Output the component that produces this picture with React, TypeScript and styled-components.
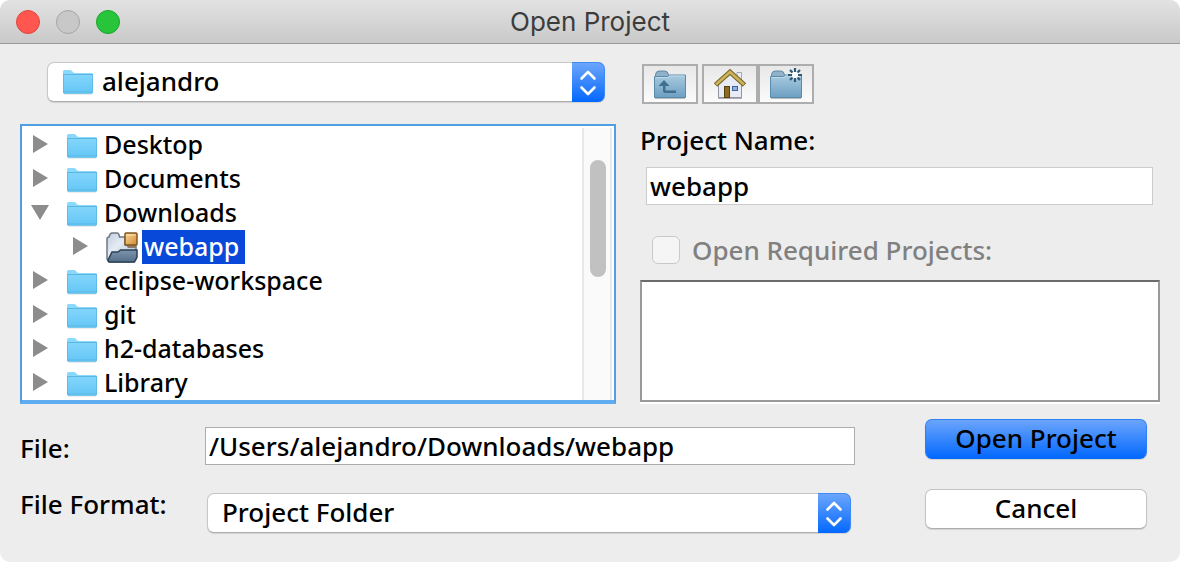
import React, { useState } from "react";
import styled, { createGlobalStyle } from "styled-components";

const GlobalStyle = createGlobalStyle`
  *, *::before, *::after { box-sizing: border-box; }
  body { margin: 0; background: #fff; }
  button, input, select { font: inherit; color: inherit; }
`;

const Window = styled.div`
  display: flex;
  flex-direction: column;
  min-height: 100vh;
  overflow: hidden;
  border-radius: 10px;
  background: #ededed;
  color: #000;
  font-family: "Noto Sans", "Open Sans", sans-serif;
  font-size: 26px;
  font-weight: 500;
  line-height: 34px;
`;

const TitleBar = styled.header`
  display: grid;
  grid-template-columns: 1fr auto 1fr;
  align-items: center;
  height: 44px;
  padding: 0 16px;
  border-bottom: 1px solid #9a9a9a;
  background: linear-gradient(#e2e2e2, #c9c9c9);
`;

const Lights = styled.div`
  display: flex;
  gap: 16px;
`;

const Light = styled.button<{ $fill: string; $edge: string }>`
  width: 24px;
  height: 24px;
  padding: 0;
  border: 1px solid ${(p) => p.$edge};
  border-radius: 50%;
  background: ${(p) => p.$fill};
`;

const Title = styled.h1`
  margin: 0;
  color: #3c3c3c;
  font-family: Inter, sans-serif;
  font-size: 26px;
  font-weight: 400;
`;

const Panels = styled.main`
  display: grid;
  grid-template-columns: minmax(0, 596fr) minmax(0, 520fr);
  gap: 24px;
  padding: 18px 20px 0;
`;

const Column = styled.section`
  display: flex;
  flex-direction: column;
`;

const LocationRow = styled.div`
  padding: 0 11px 22px 27px;
`;

const SelectShell = styled.div`
  position: relative;
`;

const SelectBox = styled.select<{ $icon?: boolean }>`
  display: block;
  appearance: none;
  width: 100%;
  height: 40px;
  padding: 0 40px 2px ${(p) => (p.$icon ? 54 : 14)}px;
  border: 1px solid #c6c6c6;
  border-bottom-color: #adadad;
  border-radius: 7px;
  background: #fff;
  box-shadow: 0 1px 1px rgba(0, 0, 0, 0.12);
`;

const SelectIcon = styled.span`
  position: absolute;
  top: 5px;
  left: 15px;
  display: flex;
  pointer-events: none;
`;

const Stepper = styled.span`
  position: absolute;
  top: 0;
  right: 0;
  display: flex;
  align-items: center;
  justify-content: center;
  width: 33px;
  height: 40px;
  border: 1px solid #3f8bf5;
  border-width: 1px 1px 0 0;
  border-radius: 0 7px 7px 0;
  background: linear-gradient(#6ba5fb, #0368fe);
  pointer-events: none;
`;

const TreeFrame = styled.div`
  display: flex;
  border: 2px solid #509fe2;
  border-bottom: 4px solid #5fadf0;
  background: #fff;
  padding-top: 2px;
`;

const Tree = styled.ul`
  flex: 1;
  margin: 0;
  padding: 0 0 0 4px;
  list-style: none;
  font-size: 25px;
`;

const TreeRow = styled.li<{ $level: number }>`
  display: flex;
  align-items: center;
  height: 34px;
  padding-left: ${(p) => p.$level * 40}px;
`;

const Disclosure = styled.button`
  display: flex;
  align-items: center;
  justify-content: center;
  width: 28px;
  height: 32px;
  margin-right: 12px;
  padding: 0 0 2px;
  border: 0;
  background: none;
`;

const ItemName = styled.span<{ $selected?: boolean }>`
  height: 34px;
  margin-left: 4px;
  padding: 0 6px 0 2px;
  background: ${(p) => (p.$selected ? "#0849d9" : "transparent")};
  color: ${(p) => (p.$selected ? "#fff" : "inherit")};
  line-height: 32px;
`;

const ScrollTrack = styled.div`
  width: 30px;
  margin-right: 2px;
  padding: 32px 4px 0 6px;
  border: solid #e8e8e8;
  border-width: 0 2px;
  background: #fafafa;
`;

const ScrollThumb = styled.div`
  width: 16px;
  height: 117px;
  border-radius: 8px;
  background: #c1c1c1;
`;

const Toolbar = styled.div`
  display: flex;
  padding: 2px 2px 19px;
`;

const ToolButton = styled.button<{ $apart?: boolean }>`
  display: flex;
  align-items: center;
  justify-content: center;
  width: 56px;
  height: 40px;
  margin-right: ${(p) => (p.$apart ? 4 : 0)}px;
  padding: 0;
  border: 2px solid #adadad;
  background: linear-gradient(#e8e8e8, #fbfbfb);
`;

const NameField = styled.div`
  display: flex;
  flex-direction: column;
  gap: 10px;
`;

const TextInput = styled.input<{ $soft?: boolean }>`
  width: 100%;
  height: 38px;
  padding: 0 3px;
  border: 1px solid ${(p) => (p.$soft ? "#cbcbcb" : "#adadad")};
  border-radius: 0;
  background: #fff;
  outline: 0;
`;

const Inset = styled.div`
  display: flex;
  padding: 0 7px 0 6px;
`;

const RequiredRow = styled.label`
  display: flex;
  align-items: center;
  gap: 12px;
  margin: 28px 0 13px;
  padding-left: 12px;
  color: #808080;
`;

const CheckBox = styled.input`
  appearance: none;
  width: 28px;
  height: 28px;
  margin: 0;
  border: 1px solid #c9c9c9;
  border-radius: 6px;
  background: #f5f5f5;
`;

const RequiredList = styled.div`
  flex: 1;
  margin-bottom: 2px;
  border: 2px solid #999;
  border-top-color: #6b6b6b;
  background: #fff;
  box-shadow: 0 2px 0 #fff;
`;

const Footer = styled.footer`
  display: flex;
  justify-content: space-between;
  gap: 70px;
  padding: 15px 33px 29px 20px;
`;

const Fields = styled.div`
  flex: 1;
  display: grid;
  grid-template-columns: 185px minmax(0, 1fr);
  align-items: start;
  row-gap: 22px;
  padding-top: 8px;
`;

const FieldLabel = styled.label<{ $low?: boolean }>`
  padding-top: ${(p) => (p.$low ? 4 : 0)}px;
`;

const FormatField = styled.div`
  padding: 6px 4px 0 2px;
`;

const Actions = styled.div`
  display: flex;
  flex-direction: column;
  gap: 30px;
  width: 222px;
`;

const ActionButton = styled.button<{ $primary?: boolean }>`
  height: 40px;
  padding: 0 0 2px;
  border: 1px solid ${(p) => (p.$primary ? "#2f7ff3" : "#c4c4c4")};
  border-bottom-color: ${(p) => (p.$primary ? "#0368fe" : "#adadad")};
  border-radius: 7px;
  background: ${(p) => (p.$primary ? "linear-gradient(#6ba5fb, #0368fe)" : "#fff")};
  box-shadow: 0 1px 1px rgba(0, 0, 0, 0.12);
`;

function Folder() {
  return (
    <svg width="32" height="28" viewBox="0 -2 32 28" aria-hidden="true">
      <defs>
        <linearGradient id="folderFront" x1="0" y1="0" x2="0" y2="1">
          <stop offset="0" stopColor="#82d5fb" />
          <stop offset="1" stopColor="#64c6f6" />
        </linearGradient>
      </defs>
      <path d="M2 25h28" stroke="#000" strokeOpacity=".15" />
      <path d="M1 23V2.500Q1 1 2.500 1H8q1.500 0 2.500 1.500T13 4h16.500Q31 4 31 5.500V23q0 1.500-1.500 1.500h-27Q1 24.500 1 23z" fill="#8ad8fb" />
      <path d="M1 6h30v17q0 1.500-1.500 1.500h-27Q1 24.500 1 23z" fill="url(#folderFront)" />
      <path d="M1 5.500h30" stroke="#5cb6e2" />
      <path d="M1.500 6v17q0 1 1 1h27q1 0 1-1V6" fill="none" stroke="#57b3df" strokeOpacity=".7" />
      <path d="M2 22.500h28" stroke="#55b4e2" strokeOpacity=".4" />
    </svg>
  );
}

function ProjectFolder() {
  return (
    <svg width="32" height="32" viewBox="0 0 32 32" aria-hidden="true">
      <defs>
        <linearGradient id="projBack" x1="0" y1="0" x2="1" y2="1">
          <stop offset="0" stopColor="#c3cedb" />
          <stop offset=".4" stopColor="#e4ebf4" />
          <stop offset="1" stopColor="#a9b9cb" />
        </linearGradient>
        <linearGradient id="projFront" x1="0" y1="0" x2="0" y2="1">
          <stop offset="0" stopColor="#7d95ae" />
          <stop offset="1" stopColor="#566f88" />
        </linearGradient>
        <linearGradient id="projBox" x1="0" y1="0" x2="1" y2="1">
          <stop offset="0" stopColor="#ffd795" />
          <stop offset="1" stopColor="#cf8a35" />
        </linearGradient>
      </defs>
      <path d="M1 28V8q0-2 2-2 1-4 3-4h5q2 0 2.500 4H19v8h11v14l-3 3H3z" fill="url(#projBack)" stroke="#6b7785" strokeWidth="1.500" />
      <path d="M2 29l4-8h6l2.500-2H31v7l-2.500 5H4q-2 0-2-2z" fill="url(#projFront)" stroke="#2d4155" strokeWidth="1.500" />
      <path d="M20 14h10v3H22z" fill="#8b7a66" />
      <rect x="19" y="2" width="12" height="12" rx="1" fill="url(#projBox)" stroke="#805722" strokeWidth="1.500" />
      <path d="M20.500 4h9" stroke="#ffe4ad" />
    </svg>
  );
}

function Chevrons() {
  return (
    <svg width="18" height="26" viewBox="0 0 18 26" aria-hidden="true">
      <path d="M2.500 8.500L9 2l6.500 6.500M2.500 17.500L9 24l6.500-6.500" fill="none" stroke="#fff" strokeWidth="2.600" strokeLinecap="round" strokeLinejoin="round" />
    </svg>
  );
}

function Triangle({ open }: { open: boolean }) {
  return (
    <svg width="18" height="18" viewBox="0 0 18 18" aria-hidden="true">
      <path d={open ? "M0 2h18L9 17z" : "M2 0l15 9-15 9z"} fill="#8c8c8c" />
    </svg>
  );
}

function SteelFolder({ children }: { children?: React.ReactNode }) {
  return (
    <svg width="34" height="32" viewBox="0 0 34 32" aria-hidden="true">
      <defs>
        <linearGradient id="steel" x1="0" y1="0" x2="0" y2="1">
          <stop offset="0" stopColor="#a9cbe0" />
          <stop offset="1" stopColor="#6d9fc2" />
        </linearGradient>
      </defs>
      <path d="M2 30.500h30" stroke="#000" strokeOpacity=".25" />
      <path d="M2.500 9V6.500Q3 3 6 3h6q3 0 3.500 4v2z" fill="#8fb2c9" stroke="#628aa6" />
      <path d="M1.500 8.500h13l2-1.500h16v22.500h-31z" fill="url(#steel)" stroke="#5a8aac" />
      <path d="M2.500 9.500H15l2-1.500h14.500" fill="none" stroke="#bddaea" />
      {children}
    </svg>
  );
}

function UpFolder() {
  return (
    <SteelFolder>
      <path d="M11 12l5.500 6H12.500v4.500H23v2.500H12q-2 0-2-2v-5H5.500z" fill="#41708f" />
    </SteelFolder>
  );
}

function NewFolder() {
  return (
    <SteelFolder>
      <circle cx="26" cy="7" r="4.500" fill="#fff" fillOpacity=".8" />
      <path
        d="M26 0v4M26 10v4M19 7h4M29 7h4M21 2l2.500 2.500M28.500 9.500L31 12M31 2l-2.500 2.500M23.500 9.500L21 12"
        stroke="#2f5873"
        strokeWidth="2.200"
      />
      <circle cx="26" cy="7" r="2.500" fill="#fff" />
    </SteelFolder>
  );
}

function Home() {
  return (
    <svg width="34" height="32" viewBox="0 0 34 32" aria-hidden="true">
      <path d="M5 30.500h24" stroke="#000" strokeOpacity=".3" />
      <path d="M24 4.500h4.500v10l-4.500-4z" fill="#e9edf5" stroke="#a3a9b8" />
      <path d="M5.500 15L17 5l11.500 10v14.500h-23z" fill="#e9ebf4" stroke="#9296a4" />
      <path d="M2.500 17L17 4l14.500 13" fill="none" stroke="#7a6726" strokeWidth="5" />
      <path d="M3 16.500L17 4l14 12.500" fill="none" stroke="#cdb45c" strokeWidth="2.600" />
      <rect x="11.500" y="18.500" width="5" height="11" fill="#8f6b22" stroke="#594012" />
      <rect x="19.500" y="18.500" width="5" height="4" fill="#8fb4e4" stroke="#3c639b" />
    </svg>
  );
}

type Item = { name: string; nested?: boolean };

const items: Item[] = [
  { name: "Desktop" },
  { name: "Documents" },
  { name: "Downloads" },
  { name: "webapp", nested: true },
  { name: "eclipse-workspace" },
  { name: "git" },
  { name: "h2-databases" },
  { name: "Library" },
];

export default function App() {
  const [open, setOpen] = useState(true);
  const [name, setName] = useState("webapp");
  const [file, setFile] = useState("/Users/alejandro/Downloads/webapp");
  const rows = items.filter((item) => open || !item.nested);

  return (
    <>
      <GlobalStyle />
      <Window>
        <TitleBar>
          <Lights>
            <Light $fill="#ff564f" $edge="#e2463f" aria-label="Close" />
            <Light $fill="#c8c8c8" $edge="#a5a5a5" aria-label="Minimize" />
            <Light $fill="#28c53b" $edge="#17a528" aria-label="Zoom" />
          </Lights>
          <Title>Open Project</Title>
        </TitleBar>

        <Panels>
          <Column>
            <LocationRow>
              <SelectShell>
                <SelectBox $icon aria-label="Location">
                  <option>alejandro</option>
                </SelectBox>
                <SelectIcon><Folder /></SelectIcon>
                <Stepper><Chevrons /></Stepper>
              </SelectShell>
            </LocationRow>
            <TreeFrame>
              <Tree role="tree" aria-label="Folders">
                {rows.map((item) => {
                  const expanded = item.name === "Downloads" && open;
                  return (
                    <TreeRow key={item.name} role="treeitem" aria-selected={!!item.nested} $level={item.nested ? 1 : 0}>
                      <Disclosure
                        aria-label={`Toggle ${item.name}`}
                        onClick={() => item.name === "Downloads" && setOpen(!open)}
                      >
                        <Triangle open={expanded} />
                      </Disclosure>
                      {item.nested ? <ProjectFolder /> : <Folder />}
                      <ItemName $selected={item.nested}>{item.name}</ItemName>
                    </TreeRow>
                  );
                })}
              </Tree>
              <ScrollTrack><ScrollThumb /></ScrollTrack>
            </TreeFrame>
          </Column>

          <Column>
            <Toolbar>
              <ToolButton $apart aria-label="Up one level"><UpFolder /></ToolButton>
              <ToolButton aria-label="Home"><Home /></ToolButton>
              <ToolButton aria-label="New folder"><NewFolder /></ToolButton>
            </Toolbar>
            <NameField>
              <label htmlFor="project-name">Project Name:</label>
              <Inset>
                <TextInput $soft id="project-name" value={name} onChange={(e) => setName(e.target.value)} />
              </Inset>
            </NameField>
            <RequiredRow>
              <CheckBox type="checkbox" disabled />
              Open Required Projects:
            </RequiredRow>
            <RequiredList />
          </Column>
        </Panels>

        <Footer>
          <Fields>
            <FieldLabel $low htmlFor="file">File:</FieldLabel>
            <TextInput id="file" value={file} onChange={(e) => setFile(e.target.value)} />
            <FieldLabel htmlFor="format">File Format:</FieldLabel>
            <FormatField>
              <SelectShell>
                <SelectBox id="format">
                  <option>Project Folder</option>
                </SelectBox>
                <Stepper><Chevrons /></Stepper>
              </SelectShell>
            </FormatField>
          </Fields>
          <Actions>
            <ActionButton $primary>Open Project</ActionButton>
            <ActionButton>Cancel</ActionButton>
          </Actions>
        </Footer>
      </Window>
    </>
  );
}
